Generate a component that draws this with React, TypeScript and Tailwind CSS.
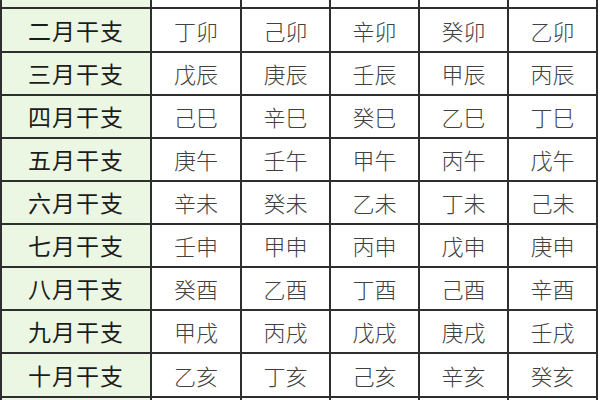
const rows: [string, string[]][] = [
  ['二月干支', ['丁卯', '己卯', '辛卯', '癸卯', '乙卯']],
  ['三月干支', ['戊辰', '庚辰', '壬辰', '甲辰', '丙辰']],
  ['四月干支', ['己巳', '辛巳', '癸巳', '乙巳', '丁巳']],
  ['五月干支', ['庚午', '壬午', '甲午', '丙午', '戊午']],
  ['六月干支', ['辛未', '癸未', '乙未', '丁未', '己未']],
  ['七月干支', ['壬申', '甲申', '丙申', '戊申', '庚申']],
  ['八月干支', ['癸酉', '乙酉', '丁酉', '己酉', '辛酉']],
  ['九月干支', ['甲戌', '丙戌', '戊戌', '庚戌', '壬戌']],
  ['十月干支', ['乙亥', '丁亥', '己亥', '辛亥', '癸亥']],
]

const font = { fontFamily: '"Noto Sans CJK SC", "Noto Sans", sans-serif' }

function EmptyRow() {
  return (
    <>
      <div className="bg-[#ebf7e3]" />
      {[0, 1, 2, 3, 4].map((i) => (
        <div key={i} className="bg-white" />
      ))}
    </>
  )
}

export default function App() {
  return (
    <div className="w-[600px] h-[400px] overflow-hidden bg-white" style={font}>
      <div className="w-[598px] bg-[#2e2e2e] px-[2px] grid grid-cols-[148px_88px_87px_87px_87px_87px] grid-rows-[7px_42px_41px_41px_41px_41px_41px_41px_41px_42px_3px] gap-[2px]">
        <EmptyRow />
        {rows.map(([label, cells]) => (
          <div key={label} className="contents">
            <div className="bg-[#ebf7e3] flex items-center justify-center text-[23px] font-normal text-[#1c1c1c] tracking-[1px]">
              {label}
            </div>
            {cells.map((c, i) => (
              <div key={i} className="bg-white flex items-center justify-center text-[22px] font-light text-[#404040]">
                {c}
              </div>
            ))}
          </div>
        ))}
        <EmptyRow />
      </div>
    </div>
  )
}
